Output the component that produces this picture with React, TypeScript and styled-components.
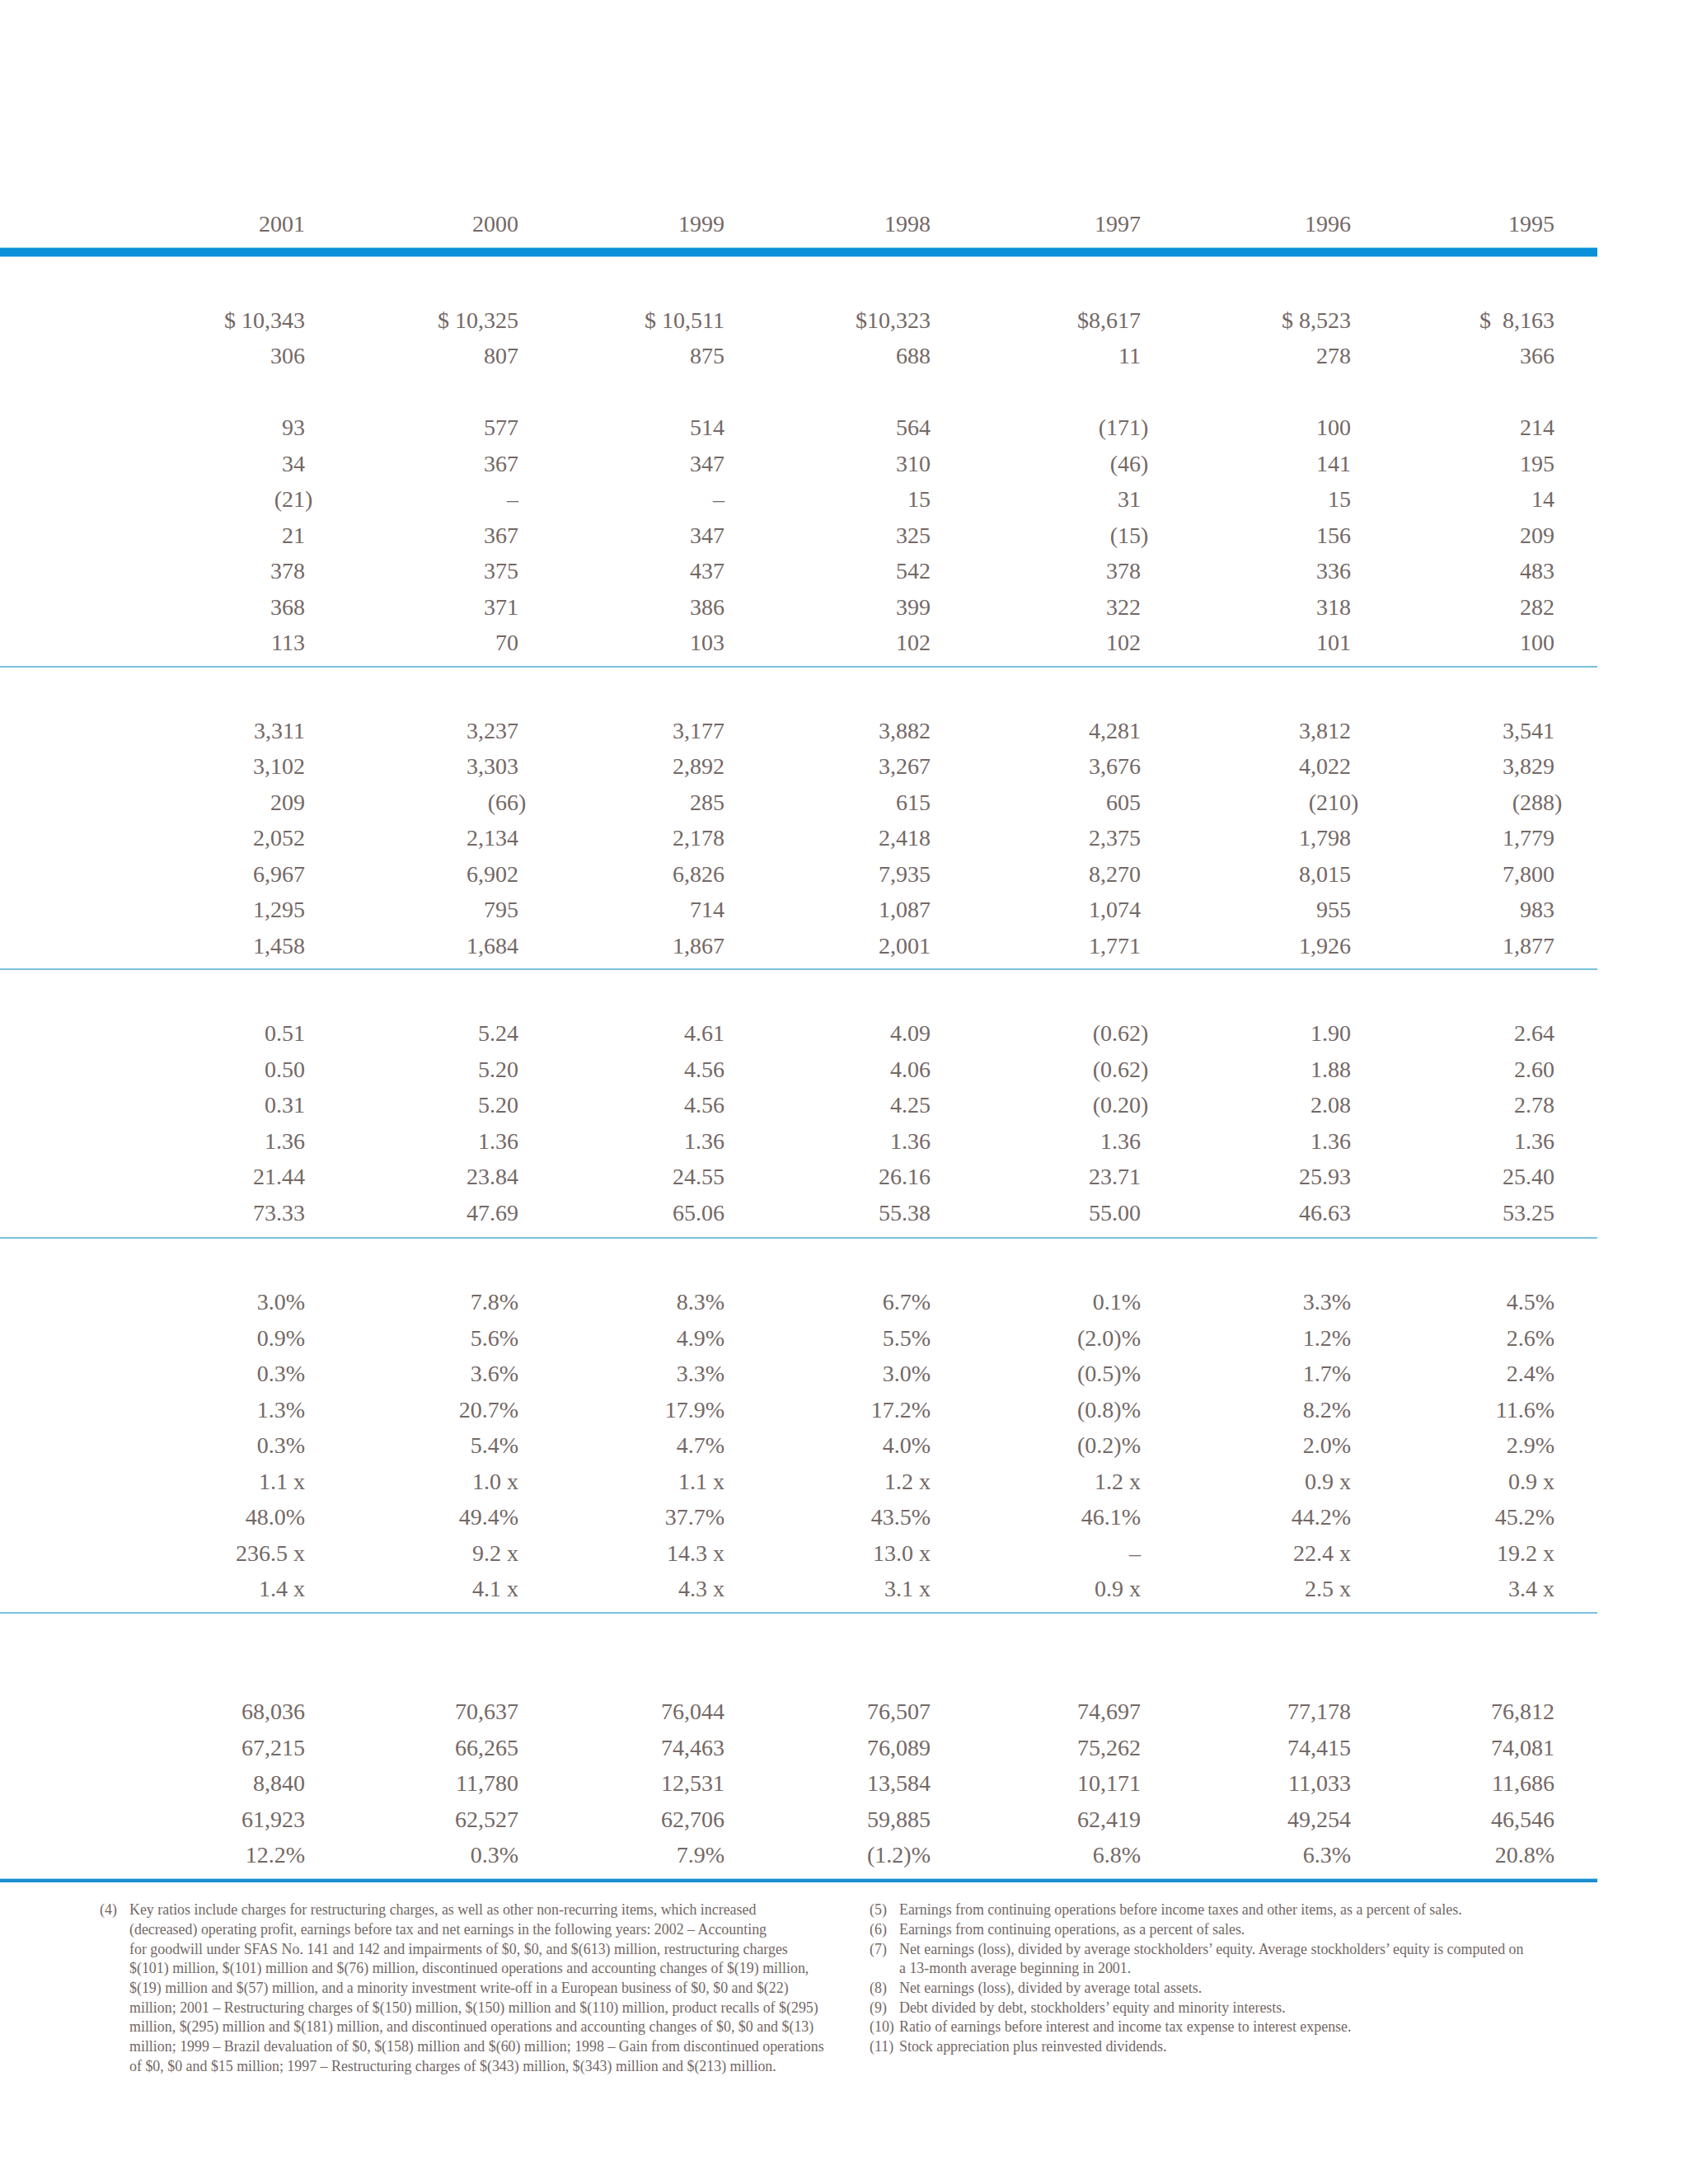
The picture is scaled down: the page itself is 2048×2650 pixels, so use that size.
import React from "react";
import styled, { createGlobalStyle } from "styled-components";

const Global = createGlobalStyle`
  html, body { margin: 0; padding: 0; background: #ffffff; }
  body { font-family: "Liberation Serif", "Times New Roman", serif; color: #736865; }
`;

const Page = styled.div`
  width: 2048px;
  min-height: 2650px;
  box-sizing: border-box;
  padding-top: 250px;
`;

const Table = styled.div`
  width: 1938px;
`;

const ROW_H = 43.5;

const Row = styled.div`
  display: grid;
  grid-template-columns: 370px 259px 250px 250px 255px 255px 247px;
  height: ${ROW_H}px;
  line-height: ${ROW_H}px;
  font-size: 28px;
`;

const Cell = styled.div`
  text-align: right;
  white-space: pre;
`;

const Hang = styled.span`
  margin-right: -0.333em;
`;

const HeaderRow = styled(Row)`
  margin-bottom: 6.5px;
`;

const ThickBar = styled.div<{ $bottom?: boolean }>`
  box-sizing: border-box;
  height: ${(p) => (p.$bottom ? 5 : 12)}px;
  background: ${(p) => (p.$bottom ? "#1a8ecf" : "#0a90d8")};
  border-top: 1px solid #8fd4f0;
  border-bottom: ${(p) => (p.$bottom ? "0" : "1px solid #8fd4f0")};
`;

const Section = styled.div<{ $top: number; $bottom: number; $line?: boolean }>`
  padding-top: ${(p) => p.$top}px;
  padding-bottom: ${(p) => p.$bottom}px;
  border-bottom: ${(p) => (p.$line ? "2px solid #79c1dc" : "0")};
`;

const Notes = styled.div`
  margin-top: 22px;
  display: grid;
  grid-template-columns: 934px 900px;
  padding-left: 121px;
  font-size: 17.9px;
  line-height: 23.7px;
`;

const NoteColumn = styled.div`
  display: flex;
  flex-direction: column;
`;

const Note = styled.div`
  display: grid;
  grid-template-columns: 36px auto;
`;

const NoteLabel = styled.span`
  white-space: nowrap;
`;

const NoteLine = styled.span`
  display: block;
  white-space: nowrap;
`;

type R = string[] | null;

const years = ["2001", "2000", "1999", "1998", "1997", "1996", "1995"];

const sections: { top: number; bottom: number; line: boolean; rows: R[] }[] = [
  {
    top: 54.75,
    bottom: 6.5,
    line: true,
    rows: [
      ["$ 10,343", "$ 10,325", "$ 10,511", "$10,323", "$8,617", "$ 8,523", "$  8,163"],
      ["306", "807", "875", "688", "11", "278", "366"],
      null,
      ["93", "577", "514", "564", "(171)", "100", "214"],
      ["34", "367", "347", "310", "(46)", "141", "195"],
      ["(21)", "–", "–", "15", "31", "15", "14"],
      ["21", "367", "347", "325", "(15)", "156", "209"],
      ["378", "375", "437", "542", "378", "336", "483"],
      ["368", "371", "386", "399", "322", "318", "282"],
      ["113", "70", "103", "102", "102", "101", "100"],
    ],
  },
  {
    top: 54.5,
    bottom: 5.5,
    line: true,
    rows: [
      ["3,311", "3,237", "3,177", "3,882", "4,281", "3,812", "3,541"],
      ["3,102", "3,303", "2,892", "3,267", "3,676", "4,022", "3,829"],
      ["209", "(66)", "285", "615", "605", "(210)", "(288)"],
      ["2,052", "2,134", "2,178", "2,418", "2,375", "1,798", "1,779"],
      ["6,967", "6,902", "6,826", "7,935", "8,270", "8,015", "7,800"],
      ["1,295", "795", "714", "1,087", "1,074", "955", "983"],
      ["1,458", "1,684", "1,867", "2,001", "1,771", "1,926", "1,877"],
    ],
  },
  {
    top: 55.5,
    bottom: 7.5,
    line: true,
    rows: [
      ["0.51", "5.24", "4.61", "4.09", "(0.62)", "1.90", "2.64"],
      ["0.50", "5.20", "4.56", "4.06", "(0.62)", "1.88", "2.60"],
      ["0.31", "5.20", "4.56", "4.25", "(0.20)", "2.08", "2.78"],
      ["1.36", "1.36", "1.36", "1.36", "1.36", "1.36", "1.36"],
      ["21.44", "23.84", "24.55", "26.16", "23.71", "25.93", "25.40"],
      ["73.33", "47.69", "65.06", "55.38", "55.00", "46.63", "53.25"],
    ],
  },
  {
    top: 55.5,
    bottom: 6,
    line: true,
    rows: [
      ["3.0%", "7.8%", "8.3%", "6.7%", "0.1%", "3.3%", "4.5%"],
      ["0.9%", "5.6%", "4.9%", "5.5%", "(2.0)%", "1.2%", "2.6%"],
      ["0.3%", "3.6%", "3.3%", "3.0%", "(0.5)%", "1.7%", "2.4%"],
      ["1.3%", "20.7%", "17.9%", "17.2%", "(0.8)%", "8.2%", "11.6%"],
      ["0.3%", "5.4%", "4.7%", "4.0%", "(0.2)%", "2.0%", "2.9%"],
      ["1.1 x", "1.0 x", "1.1 x", "1.2 x", "1.2 x", "0.9 x", "0.9 x"],
      ["48.0%", "49.4%", "37.7%", "43.5%", "46.1%", "44.2%", "45.2%"],
      ["236.5 x", "9.2 x", "14.3 x", "13.0 x", "–", "22.4 x", "19.2 x"],
      ["1.4 x", "4.1 x", "4.3 x", "3.1 x", "0.9 x", "2.5 x", "3.4 x"],
    ],
  },
  {
    top: 97.5,
    bottom: 6.5,
    line: false,
    rows: [
      ["68,036", "70,637", "76,044", "76,507", "74,697", "77,178", "76,812"],
      ["67,215", "66,265", "74,463", "76,089", "75,262", "74,415", "74,081"],
      ["8,840", "11,780", "12,531", "13,584", "10,171", "11,033", "11,686"],
      ["61,923", "62,527", "62,706", "59,885", "62,419", "49,254", "46,546"],
      ["12.2%", "0.3%", "7.9%", "(1.2)%", "6.8%", "6.3%", "20.8%"],
    ],
  },
];

const Value: React.FC<{ v: string }> = ({ v }) => {
  if (v.endsWith(")")) {
    return (
      <Cell>
        {v.slice(0, -1)}
        <Hang>)</Hang>
      </Cell>
    );
  }
  return <Cell>{v}</Cell>;
};

const leftNote = [
  "Key ratios include charges for restructuring charges, as well as other non-recurring items, which increased",
  "(decreased) operating profit, earnings before tax and net earnings in the following years:  2002 – Accounting",
  "for goodwill under SFAS No. 141 and 142 and impairments of $0, $0, and $(613) million, restructuring charges",
  "$(101) million, $(101) million and $(76) million, discontinued operations and accounting changes of $(19) million,",
  "$(19) million and $(57) million, and a minority investment write-off in a European business of $0, $0 and $(22)",
  "million;  2001 – Restructuring charges of $(150) million, $(150) million and $(110) million, product recalls of $(295)",
  "million, $(295) million and $(181) million, and discontinued operations and accounting changes of $0, $0 and $(13)",
  "million; 1999 – Brazil devaluation of $0, $(158) million and $(60) million; 1998 – Gain from discontinued operations",
  "of $0, $0 and $15 million; 1997 – Restructuring charges of $(343) million, $(343) million and $(213) million.",
];

const rightNotes: { label: string; lines: string[] }[] = [
  { label: "(5)", lines: ["Earnings from continuing operations before income taxes and other items, as a percent of sales."] },
  { label: "(6)", lines: ["Earnings from continuing operations, as a percent of sales."] },
  {
    label: "(7)",
    lines: [
      "Net earnings (loss), divided by average stockholders’ equity. Average stockholders’ equity is computed on",
      "a 13-month average beginning in 2001.",
    ],
  },
  { label: "(8)", lines: ["Net earnings (loss), divided by average total assets."] },
  { label: "(9)", lines: ["Debt divided by debt, stockholders’ equity and minority interests."] },
  { label: "(10)", lines: ["Ratio of earnings before interest and income tax expense to interest expense."] },
  { label: "(11)", lines: ["Stock appreciation plus reinvested dividends."] },
];

export default function App() {
  return (
    <>
      <Global />
      <Page>
        <Table>
          <HeaderRow>
            {years.map((y) => (
              <Cell key={y}>{y}</Cell>
            ))}
          </HeaderRow>
          <ThickBar />
          {sections.map((s, si) => (
            <Section key={si} $top={s.top} $bottom={s.bottom} $line={s.line}>
              {s.rows.map((r, ri) => (
                <Row key={ri}>{r ? r.map((v, ci) => <Value key={ci} v={v} />) : null}</Row>
              ))}
            </Section>
          ))}
          <ThickBar $bottom />
        </Table>
        <Notes>
          <NoteColumn>
            <Note>
              <NoteLabel>(4)</NoteLabel>
              <div>
                {leftNote.map((l, i) => (
                  <NoteLine key={i}>{l}</NoteLine>
                ))}
              </div>
            </Note>
          </NoteColumn>
          <NoteColumn>
            {rightNotes.map((n) => (
              <Note key={n.label}>
                <NoteLabel>{n.label}</NoteLabel>
                <div>
                  {n.lines.map((l, i) => (
                    <NoteLine key={i}>{l}</NoteLine>
                  ))}
                </div>
              </Note>
            ))}
          </NoteColumn>
        </Notes>
      </Page>
    </>
  );
}
